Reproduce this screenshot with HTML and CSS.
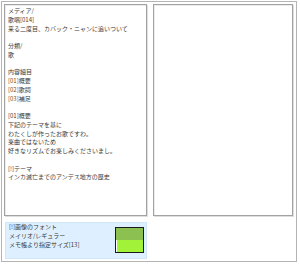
FILE: index.html
```html
<!DOCTYPE html>
<html lang="ja">
<head>
<meta charset="utf-8">
<link rel="stylesheet" href="styles.css">
</head>
<body>
<div class="frame">
  <div class="panels">
    <div class="panel memo">
      <div class="line">メディア/</div>
      <div class="line">歌唱[014]</div>
      <div class="line">来る二度目、カバック・ニャンに追いついて</div>
      <div class="line"></div>
      <div class="line">分類/</div>
      <div class="line">歌</div>
      <div class="line"></div>
      <div class="line">内容細目</div>
      <div class="line"><span class="num">[01]</span>概要</div>
      <div class="line"><span class="num">[02]</span>歌詞</div>
      <div class="line"><span class="num">[03]</span>補足</div>
      <div class="line"></div>
      <div class="line">[01]概要</div>
      <div class="line">下記のテーマを基に</div>
      <div class="line">わたくしが作ったお歌ですわ。</div>
      <div class="line">楽曲ではないため</div>
      <div class="line">好きなリズムでお楽しみくださいまし。</div>
      <div class="line"></div>
      <div class="line">[!]テーマ</div>
      <div class="line">インカ滅亡までのアンデス地方の歴史</div>
    </div>
    <div class="panel"></div>
  </div>
  <div class="info">
    <div class="info-text">
      <div class="line">[!]画像のフォント</div>
      <div class="line">メイリオ/レギュラー</div>
      <div class="line">メモ帳より指定サイズ[13]</div>
    </div>
    <div class="swatch">
      <div class="swatch-top"></div>
      <div class="swatch-bottom"></div>
    </div>
  </div>
</div>
</body>
</html>
```
FILE: styles.css
```css
html, body {
  margin: 0;
  padding: 0;
  background: #ffffff;
}
body {
  font-family: "Noto Sans CJK JP", "Noto Sans", sans-serif;
  font-size: 6px;
  line-height: 8.75px;
  color: #3a3a3a;
}
.frame {
  margin: 1px 0 0 1px;
  width: 294px;
  height: 259px;
  border: 1px solid #b4b4b4;
  padding: 2px 3px 2px 2px;
  box-sizing: border-box;
  display: flex;
  flex-direction: column;
  gap: 6px;
  width: 296px;
  height: 261px;
}
.panels {
  display: grid;
  grid-template-columns: 143px 140px;
  column-gap: 6px;
  height: 212px;
}
.panel {
  border: 1px solid #a2a2a2;
  box-shadow: 1px 1px 0 #dedede, inset 1px 1px 0 #ececec;
  box-sizing: border-box;
  height: 212px;
}
.memo {
  padding: 2px 3px;
  overflow: hidden;
}
.line {
  height: 8.75px;
  white-space: nowrap;
}
.num {
  color: #7a4b16;
}
.info {
  margin-left: 1px;
  width: 142px;
  height: 37px;
  box-sizing: border-box;
  background: #def0ff;
  border: 1px solid #cfe6fb;
  display: flex;
  justify-content: space-between;
  align-items: flex-start;
  padding: 0 2px 0 3px;
}
.info-text {
  padding-top: 0;
}
.swatch {
  margin-top: 4px;
  width: 29px;
  height: 26px;
  box-sizing: border-box;
  border: 1px solid #1a1a1a;
  display: flex;
  flex-direction: column;
}
.swatch-top {
  flex: 1;
  background: #8cc152;
}
.swatch-bottom {
  flex: 1;
  background: #a3f23a;
  border-left: 1px solid #ffffff;
}
```
